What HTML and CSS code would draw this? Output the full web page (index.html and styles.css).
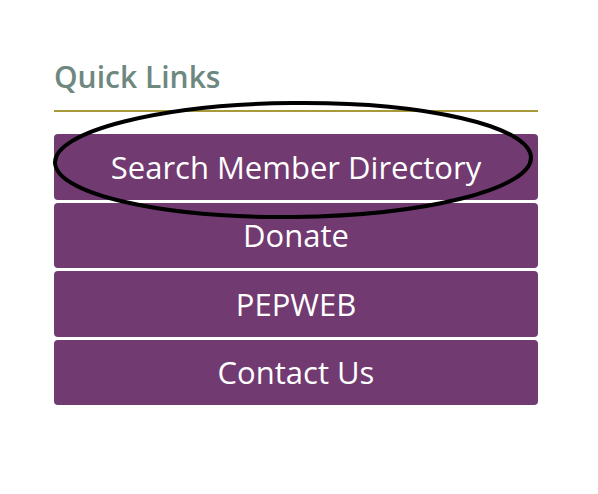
FILE: index.html
```html
<!DOCTYPE html>
<html lang="en">
<head>
<meta charset="utf-8">
<title>Quick Links</title>
<link rel="stylesheet" href="styles.css">
</head>
<body>
<aside class="widget">
  <h2 class="widget-title">Quick Links</h2>
  <nav class="links">
    <a class="link-btn" href="#">Search Member Directory</a>
    <a class="link-btn" href="#">Donate</a>
    <a class="link-btn" href="#">PEPWEB</a>
    <a class="link-btn" href="#">Contact Us</a>
  </nav>
  <svg class="annotation" width="598" height="494" viewBox="0 0 598 494">
    <ellipse cx="293" cy="160" rx="238" ry="57" fill="none" stroke="#000" stroke-width="4" transform="rotate(-0.6 293 160)"/>
  </svg>
</aside>
</body>
</html>
```
FILE: styles.css
```css
html, body {
  margin: 0;
  padding: 0;
  background: #fff;
}
body {
  font-family: "Open Sans", "Liberation Sans", sans-serif;
}
.widget {
  position: relative;
  width: 484px;
  padding: 57px 60px 0 54px;
}
.widget-title {
  margin: 0;
  font-size: 30px;
  font-weight: 600;
  color: #6e8880;
  line-height: 40px;
  padding-bottom: 13px;
  border-bottom: 2px solid #a89a3c;
}
.links {
  display: flex;
  flex-direction: column;
  gap: 3px;
  margin-top: 22px;
}
.link-btn {
  display: flex;
  align-items: center;
  justify-content: center;
  height: 65.5px;
  background: #713a70;
  border-radius: 4px;
  color: #fff;
  text-decoration: none;
  font-size: 31px;
  font-weight: 400;
}
.annotation {
  position: absolute;
  left: 0;
  top: 0;
  pointer-events: none;
}
```
